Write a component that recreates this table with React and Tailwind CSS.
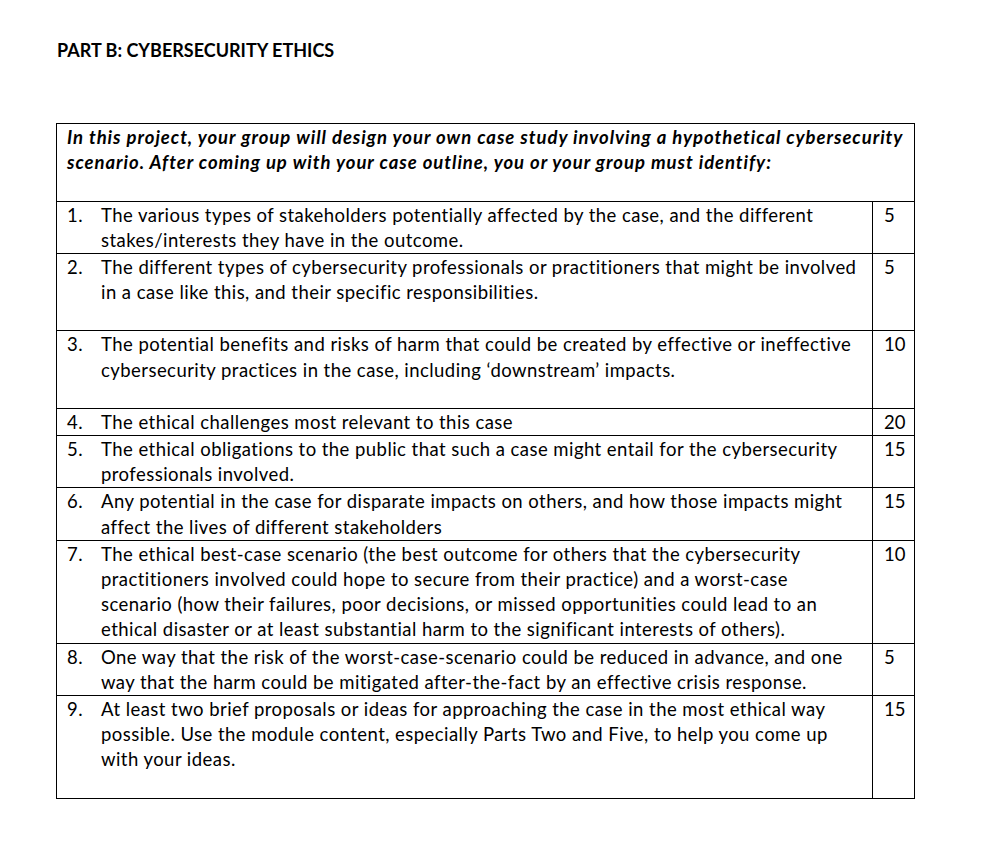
const items = [
  {
    n: "1.",
    lines: [
      "The various types of stakeholders potentially affected by the case, and the different",
      "stakes/interests they have in the outcome.",
    ],
    pts: "5",
  },
  {
    n: "2.",
    lines: [
      "The different types of cybersecurity professionals or practitioners that might be involved",
      "in a case like this, and their specific responsibilities.",
    ],
    pts: "5",
    extra: true,
  },
  {
    n: "3.",
    lines: [
      "The potential benefits and risks of harm that could be created by effective or ineffective",
      "cybersecurity practices in the case, including \u2018downstream\u2019 impacts.",
    ],
    pts: "10",
    extra: true,
  },
  {
    n: "4.",
    lines: ["The ethical challenges most relevant to this case"],
    pts: "20",
  },
  {
    n: "5.",
    lines: [
      "The ethical obligations to the public that such a case might entail for the cybersecurity",
      "professionals involved.",
    ],
    pts: "15",
  },
  {
    n: "6.",
    lines: [
      "Any potential in the case for disparate impacts on others, and how those impacts might",
      "affect the lives of different stakeholders",
    ],
    pts: "15",
  },
  {
    n: "7.",
    lines: [
      "The ethical best-case scenario (the best outcome for others that the cybersecurity",
      "practitioners involved could hope to secure from their practice) and a worst-case",
      "scenario (how their failures, poor decisions, or missed opportunities could lead to an",
      "ethical disaster or at least substantial harm to the significant interests of others).",
    ],
    pts: "10",
  },
  {
    n: "8.",
    lines: [
      "One way that the risk of the worst-case-scenario could be reduced in advance, and one",
      "way that the harm could be mitigated after-the-fact by an effective crisis response.",
    ],
    pts: "5",
  },
  {
    n: "9.",
    lines: [
      "At least two brief proposals or ideas for approaching the case in the most ethical way",
      "possible. Use the module content, especially Parts Two and Five, to help you come up",
      "with your ideas.",
    ],
    pts: "15",
    extra: true,
  },
];

export default function App() {
  return (
    <div className="min-h-screen bg-white text-black font-['Lato','Liberation_Sans',sans-serif] text-[18.5px] leading-[25.2px] tracking-[0.45px] pl-[56px] pt-[38px]">
      <h1 className="font-bold text-[18px] tracking-normal pl-[1px]">PART B: CYBERSECURITY ETHICS</h1>

      <table className="mt-[60px] w-[859px] border-collapse">
        <tbody>
          <tr>
            <td colSpan={2} className="border border-black px-[10px] pt-[1px] pb-[25px] align-top font-bold italic whitespace-nowrap tracking-[0.95px]">
              <div>In this project, your group will design your own case study involving a hypothetical cybersecurity</div>
              <div>scenario. After coming up with your case outline, you or your group must identify:</div>
            </td>
          </tr>
          {items.map((it) => (
            <tr key={it.n}>
              <td className={`border border-black pl-[10px] pr-2 pt-[1px] align-top whitespace-nowrap ${it.extra ? "pb-[25px]" : ""}`}>
                <div className="flex">
                  <span className="w-[34px] shrink-0">{it.n}</span>
                  <div>
                    {it.lines.map((l, i) => (
                      <div key={i}>{l}</div>
                    ))}
                  </div>
                </div>
              </td>
              <td className="w-[42px] border border-black pl-[11px] pt-[1px] align-top tracking-normal">{it.pts}</td>
            </tr>
          ))}
        </tbody>
      </table>
    </div>
  );
}
